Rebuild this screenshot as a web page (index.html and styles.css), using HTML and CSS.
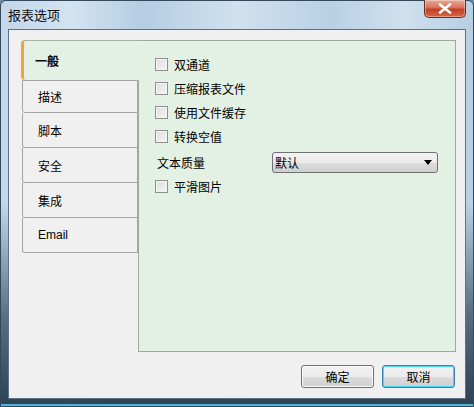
FILE: index.html
```html
<!DOCTYPE html>
<html>
<head>
<meta charset="utf-8">
<link rel="stylesheet" href="styles.css">
</head>
<body>
<div class="window">
  <div class="titlebar">
    <span class="title">报表选项</span>
    <button class="close" aria-label="关闭">
      <svg width="14" height="11" viewBox="0 0 14 11"><path d="M2 1.5 L12 9.5 M12 1.5 L2 9.5" stroke="#fff" stroke-width="2.6" stroke-linecap="round"/></svg>
    </button>
  </div>
  <div class="client">
    <div class="content">
      <div class="tabs">
        <div class="tab selected">一般</div>
        <div class="tab first">描述</div>
        <div class="tab">脚本</div>
        <div class="tab">安全</div>
        <div class="tab">集成</div>
        <div class="tab email">Email</div>
      </div>
      <div class="panel">
        <label class="row"><span class="cb"></span>双通道</label>
        <label class="row"><span class="cb"></span>压缩报表文件</label>
        <label class="row"><span class="cb"></span>使用文件缓存</label>
        <label class="row"><span class="cb"></span>转换空值</label>
        <div class="row field">
          <span class="flabel">文本质量</span>
          <div class="select"><span>默认</span>
            <svg width="8" height="5" viewBox="0 0 8 5"><path d="M0 0 H8 L4 5 Z" fill="#000"/></svg>
          </div>
        </div>
        <label class="row"><span class="cb"></span>平滑图片</label>
      </div>
    </div>
    <div class="buttons">
      <button class="btn">确定</button>
      <button class="btn default">取消</button>
    </div>
  </div>
</div>
</body>
</html>
```

FILE: styles.css
```css
html, body { margin: 0; padding: 0; }
body {
  width: 474px; height: 407px; overflow: hidden;
  font-family: "Noto Sans CJK SC", "Noto Sans", sans-serif;
  font-size: 12px; color: #000;
  background: #6d8aa6;
}
.window {
  width: 474px; height: 407px; box-sizing: border-box;
  border: 1px solid #34495c; border-radius: 6px 6px 0 0;
  background:
    linear-gradient(to bottom, rgba(0,0,0,0) 0%, rgba(0,0,0,0) 50%, rgba(20,40,60,0.6) 78%, rgba(20,40,60,0.85) 100%),
    linear-gradient(to right, #c3d7ea 0%, #d3e3f1 15%, #b4cde3 30%, #d0e1ef 50%, #b9d0e5 70%, #cfe0ee 85%, #b7cfe4 100%);
  display: flex; flex-direction: column;
  box-shadow: inset 0 -2px 0 #4fb6d8;
}
.titlebar {
  height: 28px; display: flex; justify-content: space-between; align-items: flex-start;
  padding-left: 7px;
}
.title { font-size: 13px; line-height: 13px; margin-top: 7px; color: #111; }
.close {
  width: 42px; height: 18px; margin: -1px 7px 0 0; padding: 0;
  border: 1px solid #6b2a22; border-top: none; border-radius: 0 0 5px 5px;
  background: linear-gradient(to bottom, #e8a996 0%, #d9715b 45%, #c13f22 55%, #d8674b 100%);
  display: flex; align-items: center; justify-content: center;
  box-shadow: inset 0 0 0 1px rgba(255,255,255,0.35);
}
.client {
  margin: 0 7px 0 7px; height: 370px; box-sizing: border-box;
  background: #f0f0f0; border: 1px solid #5d7084;
  display: flex; flex-direction: column;
}
.content { display: flex; padding: 10px 0 0 12px; }
.tabs { width: 117px; display: flex; flex-direction: column; position: relative; z-index: 1; }
.tab {
  box-sizing: border-box; height: 35px; margin-left: 1px; width: 116px;
  border: 1px solid #a3a3a3; border-top: none; border-radius: 0 0 0 3px;
  padding-left: 15px; display: flex; align-items: center;
  background: #f0f0f0;
}
.tab.first { border-top: 1px solid #a3a3a3; height: 33px; }
.tab.email { font-family: "Liberation Sans", Arial, sans-serif; font-size: 12px; }
.tab.selected {
  height: 40px; margin-left: 0; width: 118px;
  border: none; border-left: 3px solid #f2a43a; border-radius: 4px 0 0 4px;
  background: #e3f1e5; font-weight: bold; padding-left: 11px;
  border-top: 1px solid #a8b0a8;
}
.panel {
  box-sizing: border-box; width: 318px; height: 312px;
  background: #e3f1e5; border: 1px solid #a0a6a0;
  padding: 17px 0 0 16px;
  display: flex; flex-direction: column; gap: 11px;
}
.row { display: flex; align-items: center; height: 13px; line-height: 13px; }
.cb {
  width: 11px; height: 11px; border: 1px solid #8f8f8f; margin-right: 6px;
  background: linear-gradient(135deg, #dcdcdc, #f6f6f6);
  box-shadow: inset 0 0 0 1px #f4f4f4;
}
.field { height: 20px; margin: -2px 0 -3px 2px; }
.flabel { width: 115px; }
.select {
  box-sizing: border-box; width: 166px; height: 21px;
  border: 1px solid #707070; border-radius: 3px;
  background: linear-gradient(to bottom, #f3f3f3 0%, #ebebeb 50%, #dddddd 51%, #cfcfcf 100%);
  display: flex; align-items: center; justify-content: space-between;
  padding: 0 5px 0 2px;
}
.buttons { display: flex; justify-content: flex-end; gap: 8px; padding: 13px 10px 0 0; }
.btn {
  width: 73px; height: 23px; box-sizing: border-box; padding: 0;
  font-family: "Noto Sans CJK SC", sans-serif; font-size: 12px; color: #000;
  border: 1px solid #707070; border-radius: 3px;
  background: linear-gradient(to bottom, #f2f2f2 0%, #ebebeb 50%, #dddddd 51%, #cfcfcf 100%);
  box-shadow: inset 0 0 0 1px #fcfcfc;
}
.btn.default { border-color: #3c7fb1; box-shadow: inset 0 0 0 1px #48d4fd; }
```
